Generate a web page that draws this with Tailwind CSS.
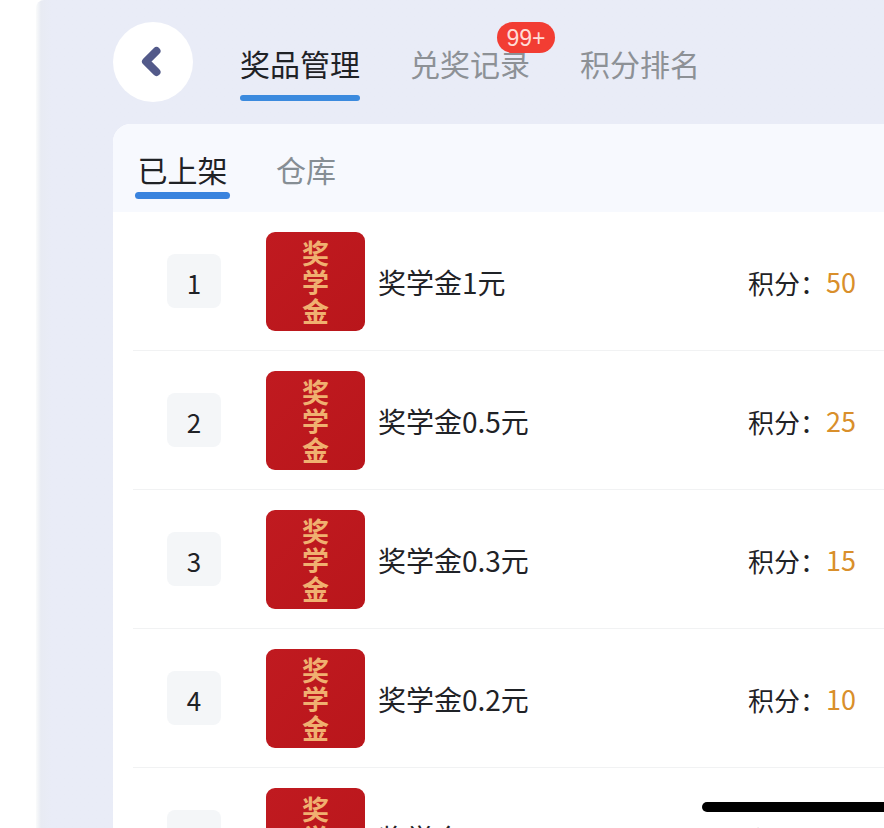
<!DOCTYPE html>
<html lang="zh-CN">
<head>
  <meta charset="UTF-8">
  <meta name="viewport" content="width=device-width, initial-scale=1.0">
  <title>奖品管理</title>
  <script src="https://cdn.jsdelivr.net/npm/@tailwindcss/browser@4"></script>
</head>
<body class="h-screen overflow-hidden bg-white pl-9 font-['Noto_Sans_CJK_SC',sans-serif] text-[#1f2226]">
  <div class="flex min-h-screen flex-col rounded-tl-lg bg-linear-to-r from-[#fafbfb] via-[#e8ebf3] via-[5px] to-[#e9ecf7] to-[16px] pl-[77px]">

    <!-- Navegação principal -->
    <header class="flex h-[124px] items-start pt-[22px]">
      <button type="button" aria-label="返回" class="flex size-20 items-center justify-center rounded-full bg-white">
        <svg class="mr-1 h-8 w-6" viewBox="0 0 24 32" fill="none" stroke="#535a8a" stroke-width="8" stroke-linecap="round" stroke-linejoin="round">
          <path d="M17.5 5 L7 15.500 L17.500 26"/>
        </svg>
      </button>
      <nav class="ml-[47px] flex gap-[50px] pt-5 text-[30px] leading-[42px] text-[#8d9196]">
        <a href="#premios" class="flex flex-col gap-[11px] text-[#1f2226]">
          奖品管理
          <span class="h-[6px] rounded-full bg-[#3b8ade]"></span>
        </a>
        <a href="#registros" class="relative">
          兑奖记录
          <span class="absolute -top-5 left-[87px] flex h-[31px] w-[58px] items-center justify-center rounded-full bg-[#f23d33] font-['Liberation_Sans',sans-serif] text-[23px] text-[#ffdcd6]">99+</span>
        </a>
        <a href="#ranking">积分排名</a>
      </nav>
    </header>

    <main class="flex-1 rounded-tl-[18px] bg-white">
      <!-- Abas da lista -->
      <div class="flex h-[88px] gap-[46px] rounded-tl-[18px] bg-[#f7f9fe] pt-6 pl-[22px] text-[30px] leading-[42px]">
        <button type="button" class="flex w-[95px] flex-col gap-[2px] self-start">
          <span class="w-full text-center">已上架</span>
          <span class="h-[7px] w-full rounded-full bg-[#3983de]"></span>
        </button>
        <button type="button" class="self-start text-[#868e94]">仓库</button>
      </div>

      <ul id="lista" class="pl-5"></ul>
    </main>
  </div>

  <div class="fixed right-0 bottom-4 h-[10px] w-[182px] rounded-l-full bg-black"></div>

  <script>
    const premios = [
      { nome: '奖学金1元', pontos: 50 },
      { nome: '奖学金0.5元', pontos: 25 },
      { nome: '奖学金0.3元', pontos: 15 },
      { nome: '奖学金0.2元', pontos: 10 },
      { nome: '奖学金0.1元', pontos: 5 }
    ];

    // Monta as linhas da lista de prêmios
    document.getElementById('lista').innerHTML = premios.map((premio, i) => `
      <li class="flex h-[139px] items-center border-b border-[#f1f2f3] pr-[26px] pl-[34px]">
        <span class="flex size-[54px] items-center justify-center rounded-lg bg-[#f4f6f8] pt-[2px] text-[26px]">${i + 1}</span>
        <div class="ml-[45px] flex size-[99px] flex-col items-center justify-center rounded-[9px] bg-linear-to-br from-[#c01a20] to-[#b9161b] text-[27px] leading-[29px] font-bold text-[#f0b070]">
          <span>奖</span><span>学</span><span>金</span>
        </div>
        <span class="ml-[13px] pt-[2px] text-[28px]">${premio.nome}</span>
        <span class="ml-auto pt-[2px] text-[26px]">积分：</span>
        <span class="w-8 pt-[2px] text-[27px] text-[#d98f2b]">${premio.pontos}</span>
      </li>`).join('');
  </script>
</body>
</html>
